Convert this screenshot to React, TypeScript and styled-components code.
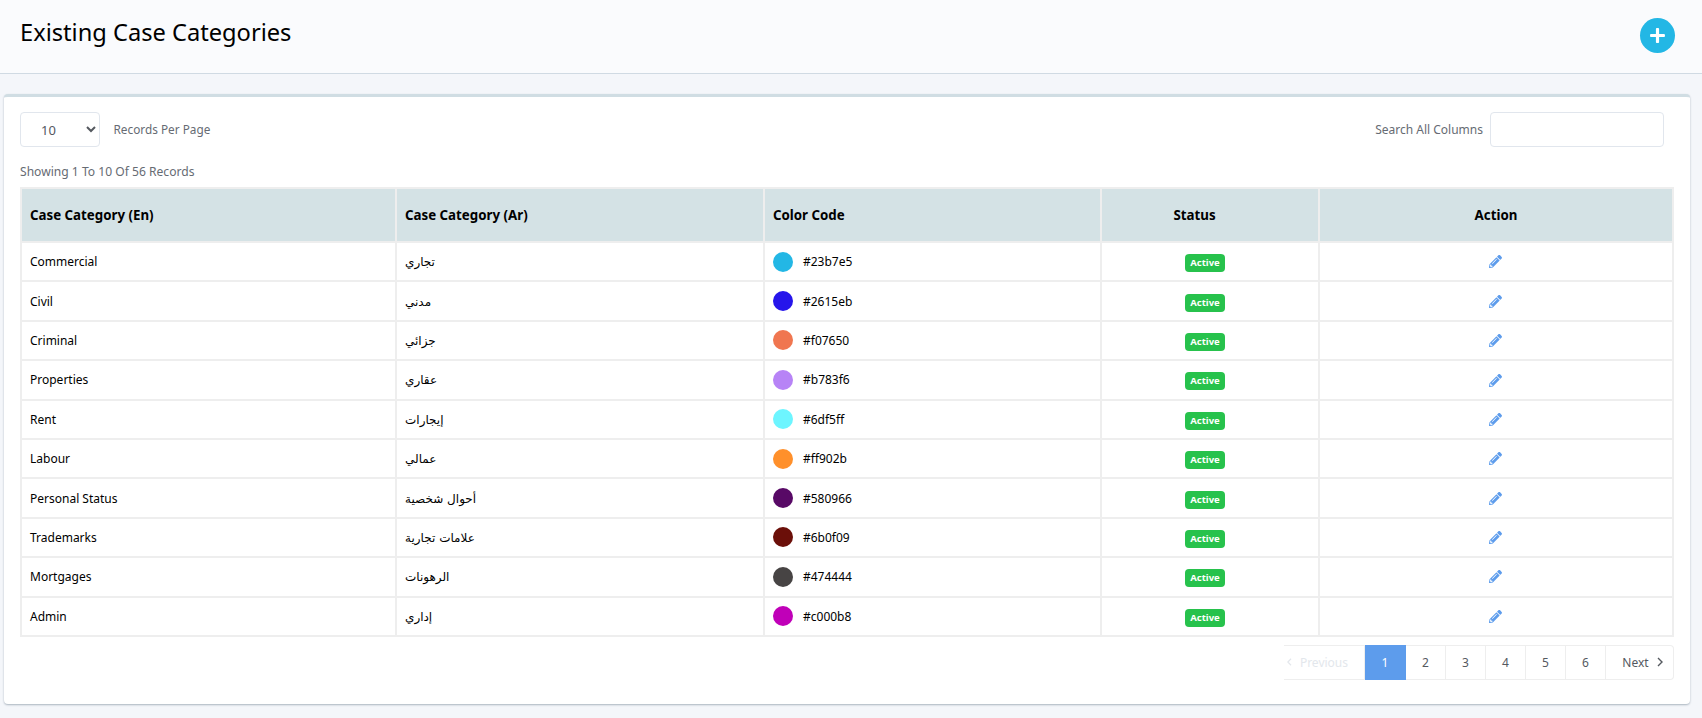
import React from "react";
import styled, { createGlobalStyle } from "styled-components";
import { FaPencilAlt, FaPlus } from "react-icons/fa";

const Global = createGlobalStyle`
  html, body { margin: 0; padding: 0; }
  body {
    background: #f4f6fa;
    font-family: "Noto Sans", "DejaVu Sans", sans-serif;
    color: #000;
  }
`;

const Page = styled.div`
  display: flex;
  flex-direction: column;
  height: 718px;
  overflow: hidden;
`;

const PageHeader = styled.header`
  display: flex;
  align-items: center;
  justify-content: space-between;
  height: 73px;
  padding: 0 27px 0 20px;
  background: #fafbfd;
  border-bottom: 1px solid #d0dae3;
`;

const Title = styled.h1`
  margin: 0 0 9px;
  font-size: 23.65px;
  font-weight: 400;
  line-height: 33px;
  color: #000;
`;

const AddButton = styled.button`
  display: flex;
  align-items: center;
  justify-content: center;
  width: 35px;
  height: 35px;
  margin-bottom: 2px;
  padding: 0;
  border: 0;
  border-radius: 50%;
  background: #23b7e5;
  color: #fff;
  font-size: 17px;
`;

const Card = styled.section`
  margin: 20px 12px 0 4px;
  height: 610px;
  box-sizing: border-box;
  padding: 15px 15px 0 16px;
  background: #fff;
  border-top: 3px solid #d0dde3;
  border-radius: 4px;
  box-shadow: 0 1px 2px rgba(80, 100, 120, 0.45);
`;

const Controls = styled.div`
  display: flex;
  align-items: center;
  justify-content: space-between;
  padding-right: 11px;
`;

const ControlGroup = styled.div`
  display: flex;
  align-items: center;
`;

const PerPage = styled.select`
  width: 80px;
  height: 35px;
  margin-right: 13.5px;
  padding: 0 10px 0 16px;
  background: #fff;
  border: 1px solid #e1e6ed;
  border-radius: 4px;
  color: #55595f;
  font: 400 13px "Noto Sans", sans-serif;
`;

const ControlLabel = styled.label<{ $size?: number }>`
  font-size: ${(p) => p.$size ?? 12}px;
  line-height: 17px;
  margin-top: -1px;
  color: #666b73;
`;

const SearchInput = styled.input`
  box-sizing: border-box;
  width: 174px;
  height: 35px;
  margin-left: 7px;
  background: #fff;
  border: 1px solid #e1e6ed;
  border-radius: 4px;
`;

const Summary = styled.div`
  margin-top: 16px;
  height: 17px;
  margin-bottom: 7px;
  font-size: 12.1px;
  line-height: 17px;
  color: #666b73;
`;

const Table = styled.table`
  width: 1653px;
  table-layout: fixed;
  border-collapse: collapse;
  border: 2px solid #eeeeee;
`;

const HeadCell = styled.th<{ $center?: boolean; $inset?: number }>`
  height: 54px;
  padding: 0 ${(p) => 8 + (p.$inset ?? 0)}px 0 8px;
  box-sizing: border-box;
  background: #d4e2e5;
  border: 2px solid #eeeeee;
  font-size: 13.3px;
  font-weight: 700;
  color: #000;
  text-align: ${(p) => (p.$center ? "center" : "left")};
`;

const Cell = styled.td<{ $center?: boolean; $inset?: number }>`
  height: 39.4px;
  padding: 0 ${(p) => 8 + (p.$inset ?? 0)}px 0 8px;
  box-sizing: border-box;
  border: 2px solid #eeeeee;
  font-size: 12px;
  color: #000;
  text-align: ${(p) => (p.$center ? "center" : "left")};
`;

const ArabicText = styled.span`
  font-family: "DejaVu Sans", "Noto Sans", sans-serif;
  font-size: 12px;
`;

const ColorCode = styled.div`
  display: flex;
  align-items: center;
  gap: 10px;
`;

const Swatch = styled.span<{ $color: string }>`
  width: 20px;
  height: 20px;
  border-radius: 50%;
  background: ${(p) => p.$color};
`;

const Badge = styled.span`
  display: inline-block;
  width: 40px;
  height: 18px;
  margin-top: 3px;
  border-radius: 4px;
  background: #27c24c;
  color: #fff;
  font-size: 9.5px;
  font-weight: 700;
  line-height: 18px;
  text-align: center;
  vertical-align: middle;
`;

const EditIcon = styled.span`
  display: inline-flex;
  margin: 0 2px 2px 0;
  vertical-align: middle;
  color: #5d9cec;
  font-size: 13px;
`;

const Pager = styled.nav`
  display: flex;
  justify-content: flex-end;
  margin-top: 8px;
  padding-right: 1px;
`;

const PageItem = styled.a<{ $active?: boolean; $disabled?: boolean; $wide?: number; $pad?: string }>`
  display: flex;
  align-items: center;
  justify-content: center;
  gap: 8px;
  box-sizing: border-box;
  width: ${(p) => p.$wide ?? 40}px;
  height: 35px;
  padding: ${(p) => p.$pad ?? "0"};
  border: 1px solid ${(p) => (p.$active ? "#5d9cec" : "#eeeeee")};
  border-left-width: 0;
  background: ${(p) => (p.$active ? "#5d9cec" : "#fff")};
  color: ${(p) => (p.$active ? "#fff" : p.$disabled ? "#e3e7ec" : "#55595f")};
  font-size: 12px;
  &:last-child { border-radius: 0 4px 4px 0; }
`;

const Chevron = ({ left }: { left?: boolean }) => (
  <svg width="6" height="10" viewBox="0 0 6 10" fill="none" stroke="currentColor" strokeWidth="1.4">
    <path d={left ? "M5 1 1 5l4 4" : "M1 1l4 4-4 4"} />
  </svg>
);

const rows = [
  ["Commercial", "تجاري", "#23b7e5"],
  ["Civil", "مدني", "#2615eb"],
  ["Criminal", "جزائي", "#f07650"],
  ["Properties", "عقاري", "#b783f6"],
  ["Rent", "إيجارات", "#6df5ff"],
  ["Labour", "عمالي", "#ff902b"],
  ["Personal Status", "أحوال شخصية", "#580966"],
  ["Trademarks", "علامات تجارية", "#6b0f09"],
  ["Mortgages", "الرهونات", "#474444"],
  ["Admin", "إداري", "#c000b8"],
];

const widths = [375, 368, 337, 218, 354];

export default function App() {
  return (
    <Page>
      <Global />
      <PageHeader>
        <Title>Existing Case Categories</Title>
        <AddButton aria-label="Add"><FaPlus /></AddButton>
      </PageHeader>
      <Card>
        <Controls>
          <ControlGroup>
            <PerPage defaultValue="10">
              <option>10</option>
              <option>25</option>
              <option>50</option>
            </PerPage>
            <ControlLabel $size={11.8}>Records Per Page</ControlLabel>
          </ControlGroup>
          <ControlGroup>
            <ControlLabel>Search All Columns</ControlLabel>
            <SearchInput />
          </ControlGroup>
        </Controls>
        <Summary>Showing 1 To 10 Of 56 Records</Summary>
        <Table>
          <colgroup>
            {widths.map((w) => <col key={w} width={w} />)}
          </colgroup>
          <thead>
            <tr>
              <HeadCell>Case Category (En)</HeadCell>
              <HeadCell>Case Category (Ar)</HeadCell>
              <HeadCell>Color Code</HeadCell>
              <HeadCell $center $inset={31}>Status</HeadCell>
              <HeadCell $center>Action</HeadCell>
            </tr>
          </thead>
          <tbody>
            {rows.map(([en, ar, color]) => (
              <tr key={en}>
                <Cell>{en}</Cell>
                <Cell><ArabicText>{ar}</ArabicText></Cell>
                <Cell>
                  <ColorCode><Swatch $color={color} />{color}</ColorCode>
                </Cell>
                <Cell $center $inset={10}><Badge>Active</Badge></Cell>
                <Cell $center><EditIcon><FaPencilAlt /></EditIcon></Cell>
              </tr>
            ))}
          </tbody>
        </Table>
        <Pager>
          <PageItem $disabled $wide={81} $pad="0 16px 0 3px"><Chevron left />Previous</PageItem>
          <PageItem $active $wide={41}>1</PageItem>
          <PageItem>2</PageItem>
          <PageItem>3</PageItem>
          <PageItem>4</PageItem>
          <PageItem>5</PageItem>
          <PageItem>6</PageItem>
          <PageItem $wide={68} $pad="0 2px 0 8px">Next<Chevron /></PageItem>
        </Pager>
      </Card>
    </Page>
  );
}
